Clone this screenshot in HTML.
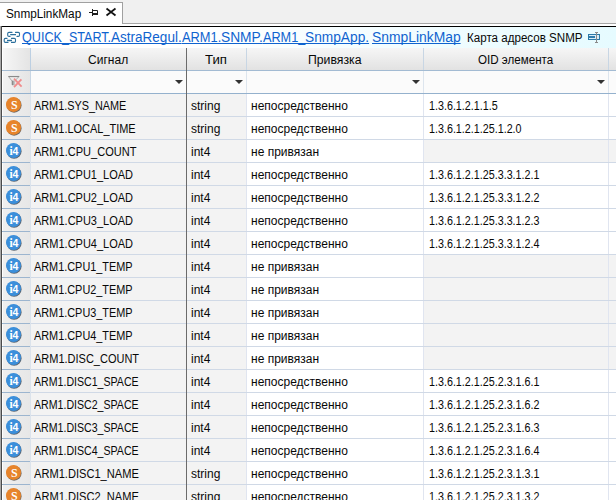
<!DOCTYPE html>
<html><head><meta charset="utf-8"><style>
*{margin:0;padding:0;box-sizing:border-box}
html,body{width:616px;height:500px;overflow:hidden;background:#f0f0f0;font-family:"Liberation Sans",sans-serif;font-size:12px;color:#080808}
.a{position:absolute}
.t{position:absolute;white-space:nowrap;transform-origin:0 0;display:block;line-height:14px}
</style></head><body>

<div class="a" style="left:122px;top:23px;width:494px;height:1px;background:#a6a6a6"></div>
<div class="a" style="left:0;top:2px;width:123px;height:24px;background:#fff;border-top:1px solid #a0a0a0;border-right:1px solid #a0a0a0"></div>
<div class="a" style="left:122px;top:24px;width:494px;height:2px;background:#fff"></div>
<span class="t" style="left:5.5px;top:7px;transform:scaleX(0.98)">SnmpLinkMap</span>
<svg class="a" style="left:84px;top:4px" width="40" height="20" viewBox="84 4 40 20">
<path d="M89 12.5H92.5" stroke="#1e1e1e" stroke-width="1"/>
<path d="M92.5 9V16" stroke="#1e1e1e" stroke-width="1"/>
<path d="M93 10.5H97.5V14H93" fill="none" stroke="#1e1e1e" stroke-width="1"/>
<path d="M93 13H98V15H93Z" fill="#1e1e1e"/>
<path d="M106.5 8.5L115.5 15.5M115.5 8.5L106.5 15.5" stroke="#111" stroke-width="1.7"/>
</svg>
<div class="a" style="left:1px;top:26px;width:615px;height:1px;background:#000"></div>
<div class="a" style="left:0;top:26px;width:1px;height:474px;background:#a8a8a8"></div>
<div class="a" style="left:1px;top:26px;width:1px;height:474px;background:#4a4a4a"></div>
<div class="a" style="left:2px;top:27px;width:614px;height:21px;background:linear-gradient(to right,#ffffff 0%,#ffffff 28%,#e6fbff 100%)"></div>
<svg class="a" style="left:0;top:28px" width="24" height="18" viewBox="0 28 24 18">
<g fill="none" stroke="#2b6f9c" stroke-width="1.1" stroke-linecap="round">
<path d="M12 32.4H9Q7.7 32.4 7.7 33.6V35.2Q7.7 36.4 9 36.4H10M15.5 32.4H18.3Q19.5 32.4 19.5 33.6V35.2Q19.5 36.4 18.3 36.4H17"/>
<path d="M7 38.4H5.4Q4.2 38.4 4.2 39.6V41.2Q4.2 42.4 5.4 42.4H8M11.5 38.4H14.3Q15.5 38.4 15.5 39.6V41.2Q15.5 42.4 14.3 42.4H11.5"/>
</g>
<path d="M10.2 34.6H16M7 40.5H12" stroke="#2b6f9c" stroke-width="1.3"/>
</svg>
<span class="t" style="left:22.4px;top:29.5px;font-size:14px;line-height:15px;color:#0f63cf;text-decoration:underline;text-decoration-skip-ink:none;transform:scaleX(0.8995)">QUICK_START.</span>
<span class="t" style="left:111.0px;top:29.5px;font-size:14px;line-height:15px;color:#0f63cf;text-decoration:underline;text-decoration-skip-ink:none;transform:scaleX(0.9664)">AstraRegul.</span>
<span class="t" style="left:181.7px;top:29.5px;font-size:14px;line-height:15px;color:#0f63cf;text-decoration:underline;text-decoration-skip-ink:none;transform:scaleX(0.9182)">ARM1.</span>
<span class="t" style="left:221.0px;top:29.5px;font-size:14px;line-height:15px;color:#0f63cf;text-decoration:underline;text-decoration-skip-ink:none;transform:scaleX(0.9824)">SNMP.</span>
<span class="t" style="left:262.8px;top:29.5px;font-size:14px;line-height:15px;color:#0f63cf;text-decoration:underline;text-decoration-skip-ink:none;transform:scaleX(0.9060)">ARM1_</span>
<span class="t" style="left:305.1px;top:29.5px;font-size:14px;line-height:15px;color:#0f63cf;text-decoration:underline;text-decoration-skip-ink:none;transform:scaleX(0.9804)">SnmpApp.</span>
<span class="t" style="left:372.4px;top:29.5px;font-size:14px;line-height:15px;color:#0f63cf;text-decoration:underline;text-decoration-skip-ink:none;transform:scaleX(0.99)">SnmpLinkMap</span>
<span class="t" style="left:467px;top:31px;transform:scaleX(0.966)">Карта адресов SNMP</span>
<svg class="a" style="left:582px;top:28px" width="24" height="18" viewBox="582 28 24 18">
<rect x="588.5" y="34.5" width="11" height="5" fill="#d8ecf6" stroke="#2b7aa8" stroke-width="1"/>
<rect x="589" y="36" width="6" height="2" fill="#2f7cac"/>
<path d="M596.5 32V43M595 32.5H598M595 42.5H598" stroke="#8a8a8a" stroke-width="1"/>
</svg>
<div class="a" style="left:2px;top:48px;width:614px;height:452px;background:#fff"></div>
<div class="a" style="left:3px;top:48px;width:613px;height:22px;background:linear-gradient(to bottom,#f6f6f6,#e2e2e2)"></div>
<div class="a" style="left:2px;top:70px;width:614px;height:1px;background:#a3bbd3"></div>
<div class="a" style="left:3px;top:48px;width:27px;height:22px;background:linear-gradient(to right,#f6f6f6,#e4e4e4)"></div>
<div class="a" style="left:30px;top:48px;width:1px;height:22px;background:#bccfe2"></div>
<div class="a" style="left:186px;top:48px;width:1px;height:22px;background:#c8d6e4"></div>
<div class="a" style="left:246px;top:48px;width:1px;height:22px;background:#c8d6e4"></div>
<div class="a" style="left:423px;top:48px;width:1px;height:22px;background:#c8d6e4"></div>
<div class="a" style="left:608px;top:48px;width:1px;height:22px;background:#c8d6e4"></div>
<div class="a" style="left:31px;top:71px;width:585px;height:22px;background:#fbfbfb"></div>
<div class="a" style="left:3px;top:71px;width:27px;height:22px;background:linear-gradient(to right,#f2f2f2,#e5e5e5)"></div>
<div class="a" style="left:2px;top:93px;width:614px;height:1px;background:#94b1cd"></div>
<div class="a" style="left:30px;top:71px;width:1px;height:22px;background:#c8d6e4"></div>
<div class="a" style="left:186px;top:71px;width:1px;height:22px;background:#dde5ee"></div>
<div class="a" style="left:246px;top:71px;width:1px;height:22px;background:#dde5ee"></div>
<div class="a" style="left:423px;top:71px;width:1px;height:22px;background:#dde5ee"></div>
<div class="a" style="left:608px;top:71px;width:1px;height:22px;background:#dde5ee"></div>
<svg class="a" style="left:174.5px;top:80px" width="8" height="4" viewBox="0 0 8 4"><path d="M0 0H8L4 4Z" fill="#333"/></svg>
<svg class="a" style="left:234.5px;top:80px" width="8" height="4" viewBox="0 0 8 4"><path d="M0 0H8L4 4Z" fill="#333"/></svg>
<svg class="a" style="left:411.5px;top:80px" width="8" height="4" viewBox="0 0 8 4"><path d="M0 0H8L4 4Z" fill="#333"/></svg>
<svg class="a" style="left:596.5px;top:80px" width="8" height="4" viewBox="0 0 8 4"><path d="M0 0H8L4 4Z" fill="#333"/></svg>
<svg class="a" style="left:6px;top:74px" width="20" height="16" viewBox="6 74 20 16">
<defs><linearGradient id="fs" x1="0" x2="1" y1="0" y2="0"><stop offset="0" stop-color="#7a7a7a"/><stop offset="1" stop-color="#d0d0d0"/></linearGradient></defs>
<path d="M8.6 76.6H19L14.6 81V84.8H12V81Z" fill="#ececec" stroke="#9c9c9c" stroke-width="0.8"/>
<path d="M8.4 76.5H19.2" stroke="#8a8a8a" stroke-width="1.1"/>
<rect x="12" y="80.6" width="2.6" height="4.4" fill="url(#fs)"/>
<path d="M14 78.6L21.6 86.6M21.4 79.4L14 87.2" stroke="#f08c8c" stroke-width="1.8"/>
</svg>
<span class="t" style="left:88.1px;top:53px;transform:scaleX(1.0)">Сигнал</span>
<span class="t" style="left:205.1px;top:53px;transform:scaleX(1.1)">Тип</span>
<span class="t" style="left:308.1px;top:53px;transform:scaleX(1.02)">Привязка</span>
<span class="t" style="left:477.8px;top:53px;transform:scaleX(0.967)">OID элемента</span>
<div class="a" style="left:3px;top:94px;width:27px;height:22px;background:linear-gradient(to right,#efefef,#e7e7e7)"></div>
<div class="a" style="left:31px;top:94px;width:215px;height:22px;background:#f3f3f3"></div>
<div class="a" style="left:2px;top:116px;width:28px;height:1px;background:#9cb5cf"></div>
<div class="a" style="left:31px;top:116px;width:585px;height:1px;background:#d0d9e6"></div>
<div class="a" style="left:30px;top:94px;width:1px;height:23px;background:#dbe3ec"></div>
<div class="a" style="left:186px;top:94px;width:1px;height:23px;background:#6b6b6b"></div>
<div class="a" style="left:246px;top:94px;width:1px;height:22px;background:#e0e5f0"></div>
<div class="a" style="left:423px;top:94px;width:1px;height:22px;background:#e0e5f0"></div>
<div class="a" style="left:608px;top:94px;width:1px;height:22px;background:#e0e5f0"></div>
<div class="a" style="left:5.6px;top:96.8px;width:15.2px;height:14.9px;border-radius:50%;background:#e7842b;box-shadow:0.6px 0.7px 0 #6f6a66"></div>
<span class="t" style="left:10.6px;top:97.6px;font-family:&quot;Liberation Serif&quot;,serif;font-size:12.5px;font-weight:bold;color:#fff;line-height:14px;transform:scaleX(0.95)">S</span>
<span class="t" style="left:34px;top:99px;transform:scaleX(0.905)">ARM1.SYS_NAME</span>
<span class="t" style="left:191px;top:99px">string</span>
<span class="t" style="left:251px;top:99px;transform:scaleX(1.0)">непосредственно</span>
<span class="t" style="left:428.6px;top:99px;transform:scaleX(0.895)">1.3.6.1.2.1.1.5</span>
<div class="a" style="left:3px;top:117px;width:27px;height:22px;background:linear-gradient(to right,#efefef,#e7e7e7)"></div>
<div class="a" style="left:31px;top:117px;width:215px;height:22px;background:#f3f3f3"></div>
<div class="a" style="left:2px;top:139px;width:28px;height:1px;background:#9cb5cf"></div>
<div class="a" style="left:31px;top:139px;width:585px;height:1px;background:#d0d9e6"></div>
<div class="a" style="left:30px;top:117px;width:1px;height:23px;background:#dbe3ec"></div>
<div class="a" style="left:186px;top:117px;width:1px;height:23px;background:#6b6b6b"></div>
<div class="a" style="left:246px;top:117px;width:1px;height:22px;background:#e0e5f0"></div>
<div class="a" style="left:423px;top:117px;width:1px;height:22px;background:#e0e5f0"></div>
<div class="a" style="left:608px;top:117px;width:1px;height:22px;background:#e0e5f0"></div>
<div class="a" style="left:5.6px;top:119.8px;width:15.2px;height:14.9px;border-radius:50%;background:#e7842b;box-shadow:0.6px 0.7px 0 #6f6a66"></div>
<span class="t" style="left:10.6px;top:120.6px;font-family:&quot;Liberation Serif&quot;,serif;font-size:12.5px;font-weight:bold;color:#fff;line-height:14px;transform:scaleX(0.95)">S</span>
<span class="t" style="left:34px;top:122px;transform:scaleX(0.913)">ARM1.LOCAL_TIME</span>
<span class="t" style="left:191px;top:122px">string</span>
<span class="t" style="left:251px;top:122px;transform:scaleX(1.0)">непосредственно</span>
<span class="t" style="left:428.6px;top:122px;transform:scaleX(0.895)">1.3.6.1.2.1.25.1.2.0</span>
<div class="a" style="left:3px;top:140px;width:27px;height:22px;background:linear-gradient(to right,#efefef,#e7e7e7)"></div>
<div class="a" style="left:31px;top:140px;width:215px;height:22px;background:#f3f3f3"></div>
<div class="a" style="left:424px;top:140px;width:192px;height:22px;background:#f3f3f3"></div>
<div class="a" style="left:2px;top:162px;width:28px;height:1px;background:#9cb5cf"></div>
<div class="a" style="left:31px;top:162px;width:585px;height:1px;background:#d0d9e6"></div>
<div class="a" style="left:30px;top:140px;width:1px;height:23px;background:#dbe3ec"></div>
<div class="a" style="left:186px;top:140px;width:1px;height:23px;background:#6b6b6b"></div>
<div class="a" style="left:246px;top:140px;width:1px;height:22px;background:#e0e5f0"></div>
<div class="a" style="left:423px;top:140px;width:1px;height:22px;background:#e0e5f0"></div>
<div class="a" style="left:608px;top:140px;width:1px;height:22px;background:#e0e5f0"></div>
<div class="a" style="left:5.6px;top:142.8px;width:15.2px;height:15px;border-radius:50%;background:#3b8fdb;box-shadow:0.6px 0.7px 0 #5a6470"></div>
<span class="t" style="left:9.4px;top:144.6px;font-family:&quot;Liberation Serif&quot;,serif;font-size:11.5px;font-weight:bold;color:#fff;line-height:12px">i</span>
<span class="t" style="left:12.4px;top:145.2px;font-size:10.5px;font-weight:bold;color:#fff;line-height:12px">4</span>
<span class="t" style="left:34px;top:145px;transform:scaleX(0.92)">ARM1.CPU_COUNT</span>
<span class="t" style="left:191px;top:145px">int4</span>
<span class="t" style="left:251px;top:145px;transform:scaleX(1.0)">не привязан</span>
<div class="a" style="left:3px;top:163px;width:27px;height:22px;background:linear-gradient(to right,#efefef,#e7e7e7)"></div>
<div class="a" style="left:31px;top:163px;width:215px;height:22px;background:#f3f3f3"></div>
<div class="a" style="left:2px;top:185px;width:28px;height:1px;background:#9cb5cf"></div>
<div class="a" style="left:31px;top:185px;width:585px;height:1px;background:#d0d9e6"></div>
<div class="a" style="left:30px;top:163px;width:1px;height:23px;background:#dbe3ec"></div>
<div class="a" style="left:186px;top:163px;width:1px;height:23px;background:#6b6b6b"></div>
<div class="a" style="left:246px;top:163px;width:1px;height:22px;background:#e0e5f0"></div>
<div class="a" style="left:423px;top:163px;width:1px;height:22px;background:#e0e5f0"></div>
<div class="a" style="left:608px;top:163px;width:1px;height:22px;background:#e0e5f0"></div>
<div class="a" style="left:5.6px;top:165.8px;width:15.2px;height:15px;border-radius:50%;background:#3b8fdb;box-shadow:0.6px 0.7px 0 #5a6470"></div>
<span class="t" style="left:9.4px;top:167.6px;font-family:&quot;Liberation Serif&quot;,serif;font-size:11.5px;font-weight:bold;color:#fff;line-height:12px">i</span>
<span class="t" style="left:12.4px;top:168.2px;font-size:10.5px;font-weight:bold;color:#fff;line-height:12px">4</span>
<span class="t" style="left:34px;top:168px;transform:scaleX(0.917)">ARM1.CPU1_LOAD</span>
<span class="t" style="left:191px;top:168px">int4</span>
<span class="t" style="left:251px;top:168px;transform:scaleX(1.0)">непосредственно</span>
<span class="t" style="left:428.6px;top:168px;transform:scaleX(0.895)">1.3.6.1.2.1.25.3.3.1.2.1</span>
<div class="a" style="left:3px;top:186px;width:27px;height:22px;background:linear-gradient(to right,#efefef,#e7e7e7)"></div>
<div class="a" style="left:31px;top:186px;width:215px;height:22px;background:#f3f3f3"></div>
<div class="a" style="left:2px;top:208px;width:28px;height:1px;background:#9cb5cf"></div>
<div class="a" style="left:31px;top:208px;width:585px;height:1px;background:#d0d9e6"></div>
<div class="a" style="left:30px;top:186px;width:1px;height:23px;background:#dbe3ec"></div>
<div class="a" style="left:186px;top:186px;width:1px;height:23px;background:#6b6b6b"></div>
<div class="a" style="left:246px;top:186px;width:1px;height:22px;background:#e0e5f0"></div>
<div class="a" style="left:423px;top:186px;width:1px;height:22px;background:#e0e5f0"></div>
<div class="a" style="left:608px;top:186px;width:1px;height:22px;background:#e0e5f0"></div>
<div class="a" style="left:5.6px;top:188.8px;width:15.2px;height:15px;border-radius:50%;background:#3b8fdb;box-shadow:0.6px 0.7px 0 #5a6470"></div>
<span class="t" style="left:9.4px;top:190.6px;font-family:&quot;Liberation Serif&quot;,serif;font-size:11.5px;font-weight:bold;color:#fff;line-height:12px">i</span>
<span class="t" style="left:12.4px;top:191.2px;font-size:10.5px;font-weight:bold;color:#fff;line-height:12px">4</span>
<span class="t" style="left:34px;top:191px;transform:scaleX(0.917)">ARM1.CPU2_LOAD</span>
<span class="t" style="left:191px;top:191px">int4</span>
<span class="t" style="left:251px;top:191px;transform:scaleX(1.0)">непосредственно</span>
<span class="t" style="left:428.6px;top:191px;transform:scaleX(0.895)">1.3.6.1.2.1.25.3.3.1.2.2</span>
<div class="a" style="left:3px;top:209px;width:27px;height:22px;background:linear-gradient(to right,#efefef,#e7e7e7)"></div>
<div class="a" style="left:31px;top:209px;width:215px;height:22px;background:#f3f3f3"></div>
<div class="a" style="left:2px;top:231px;width:28px;height:1px;background:#9cb5cf"></div>
<div class="a" style="left:31px;top:231px;width:585px;height:1px;background:#d0d9e6"></div>
<div class="a" style="left:30px;top:209px;width:1px;height:23px;background:#dbe3ec"></div>
<div class="a" style="left:186px;top:209px;width:1px;height:23px;background:#6b6b6b"></div>
<div class="a" style="left:246px;top:209px;width:1px;height:22px;background:#e0e5f0"></div>
<div class="a" style="left:423px;top:209px;width:1px;height:22px;background:#e0e5f0"></div>
<div class="a" style="left:608px;top:209px;width:1px;height:22px;background:#e0e5f0"></div>
<div class="a" style="left:5.6px;top:211.8px;width:15.2px;height:15px;border-radius:50%;background:#3b8fdb;box-shadow:0.6px 0.7px 0 #5a6470"></div>
<span class="t" style="left:9.4px;top:213.6px;font-family:&quot;Liberation Serif&quot;,serif;font-size:11.5px;font-weight:bold;color:#fff;line-height:12px">i</span>
<span class="t" style="left:12.4px;top:214.2px;font-size:10.5px;font-weight:bold;color:#fff;line-height:12px">4</span>
<span class="t" style="left:34px;top:214px;transform:scaleX(0.917)">ARM1.CPU3_LOAD</span>
<span class="t" style="left:191px;top:214px">int4</span>
<span class="t" style="left:251px;top:214px;transform:scaleX(1.0)">непосредственно</span>
<span class="t" style="left:428.6px;top:214px;transform:scaleX(0.895)">1.3.6.1.2.1.25.3.3.1.2.3</span>
<div class="a" style="left:3px;top:232px;width:27px;height:22px;background:linear-gradient(to right,#efefef,#e7e7e7)"></div>
<div class="a" style="left:31px;top:232px;width:215px;height:22px;background:#f3f3f3"></div>
<div class="a" style="left:2px;top:254px;width:28px;height:1px;background:#9cb5cf"></div>
<div class="a" style="left:31px;top:254px;width:585px;height:1px;background:#d0d9e6"></div>
<div class="a" style="left:30px;top:232px;width:1px;height:23px;background:#dbe3ec"></div>
<div class="a" style="left:186px;top:232px;width:1px;height:23px;background:#6b6b6b"></div>
<div class="a" style="left:246px;top:232px;width:1px;height:22px;background:#e0e5f0"></div>
<div class="a" style="left:423px;top:232px;width:1px;height:22px;background:#e0e5f0"></div>
<div class="a" style="left:608px;top:232px;width:1px;height:22px;background:#e0e5f0"></div>
<div class="a" style="left:5.6px;top:234.8px;width:15.2px;height:15px;border-radius:50%;background:#3b8fdb;box-shadow:0.6px 0.7px 0 #5a6470"></div>
<span class="t" style="left:9.4px;top:236.6px;font-family:&quot;Liberation Serif&quot;,serif;font-size:11.5px;font-weight:bold;color:#fff;line-height:12px">i</span>
<span class="t" style="left:12.4px;top:237.2px;font-size:10.5px;font-weight:bold;color:#fff;line-height:12px">4</span>
<span class="t" style="left:34px;top:237px;transform:scaleX(0.917)">ARM1.CPU4_LOAD</span>
<span class="t" style="left:191px;top:237px">int4</span>
<span class="t" style="left:251px;top:237px;transform:scaleX(1.0)">непосредственно</span>
<span class="t" style="left:428.6px;top:237px;transform:scaleX(0.895)">1.3.6.1.2.1.25.3.3.1.2.4</span>
<div class="a" style="left:3px;top:255px;width:27px;height:22px;background:linear-gradient(to right,#efefef,#e7e7e7)"></div>
<div class="a" style="left:31px;top:255px;width:215px;height:22px;background:#f3f3f3"></div>
<div class="a" style="left:424px;top:255px;width:192px;height:22px;background:#f3f3f3"></div>
<div class="a" style="left:2px;top:277px;width:28px;height:1px;background:#9cb5cf"></div>
<div class="a" style="left:31px;top:277px;width:585px;height:1px;background:#d0d9e6"></div>
<div class="a" style="left:30px;top:255px;width:1px;height:23px;background:#dbe3ec"></div>
<div class="a" style="left:186px;top:255px;width:1px;height:23px;background:#6b6b6b"></div>
<div class="a" style="left:246px;top:255px;width:1px;height:22px;background:#e0e5f0"></div>
<div class="a" style="left:423px;top:255px;width:1px;height:22px;background:#e0e5f0"></div>
<div class="a" style="left:608px;top:255px;width:1px;height:22px;background:#e0e5f0"></div>
<div class="a" style="left:5.6px;top:257.8px;width:15.2px;height:15px;border-radius:50%;background:#3b8fdb;box-shadow:0.6px 0.7px 0 #5a6470"></div>
<span class="t" style="left:9.4px;top:259.6px;font-family:&quot;Liberation Serif&quot;,serif;font-size:11.5px;font-weight:bold;color:#fff;line-height:12px">i</span>
<span class="t" style="left:12.4px;top:260.2px;font-size:10.5px;font-weight:bold;color:#fff;line-height:12px">4</span>
<span class="t" style="left:34px;top:260px;transform:scaleX(0.907)">ARM1.CPU1_TEMP</span>
<span class="t" style="left:191px;top:260px">int4</span>
<span class="t" style="left:251px;top:260px;transform:scaleX(1.0)">не привязан</span>
<div class="a" style="left:3px;top:278px;width:27px;height:22px;background:linear-gradient(to right,#efefef,#e7e7e7)"></div>
<div class="a" style="left:31px;top:278px;width:215px;height:22px;background:#f3f3f3"></div>
<div class="a" style="left:424px;top:278px;width:192px;height:22px;background:#f3f3f3"></div>
<div class="a" style="left:2px;top:300px;width:28px;height:1px;background:#9cb5cf"></div>
<div class="a" style="left:31px;top:300px;width:585px;height:1px;background:#d0d9e6"></div>
<div class="a" style="left:30px;top:278px;width:1px;height:23px;background:#dbe3ec"></div>
<div class="a" style="left:186px;top:278px;width:1px;height:23px;background:#6b6b6b"></div>
<div class="a" style="left:246px;top:278px;width:1px;height:22px;background:#e0e5f0"></div>
<div class="a" style="left:423px;top:278px;width:1px;height:22px;background:#e0e5f0"></div>
<div class="a" style="left:608px;top:278px;width:1px;height:22px;background:#e0e5f0"></div>
<div class="a" style="left:5.6px;top:280.8px;width:15.2px;height:15px;border-radius:50%;background:#3b8fdb;box-shadow:0.6px 0.7px 0 #5a6470"></div>
<span class="t" style="left:9.4px;top:282.6px;font-family:&quot;Liberation Serif&quot;,serif;font-size:11.5px;font-weight:bold;color:#fff;line-height:12px">i</span>
<span class="t" style="left:12.4px;top:283.2px;font-size:10.5px;font-weight:bold;color:#fff;line-height:12px">4</span>
<span class="t" style="left:34px;top:283px;transform:scaleX(0.907)">ARM1.CPU2_TEMP</span>
<span class="t" style="left:191px;top:283px">int4</span>
<span class="t" style="left:251px;top:283px;transform:scaleX(1.0)">не привязан</span>
<div class="a" style="left:3px;top:301px;width:27px;height:22px;background:linear-gradient(to right,#efefef,#e7e7e7)"></div>
<div class="a" style="left:31px;top:301px;width:215px;height:22px;background:#f3f3f3"></div>
<div class="a" style="left:424px;top:301px;width:192px;height:22px;background:#f3f3f3"></div>
<div class="a" style="left:2px;top:323px;width:28px;height:1px;background:#9cb5cf"></div>
<div class="a" style="left:31px;top:323px;width:585px;height:1px;background:#d0d9e6"></div>
<div class="a" style="left:30px;top:301px;width:1px;height:23px;background:#dbe3ec"></div>
<div class="a" style="left:186px;top:301px;width:1px;height:23px;background:#6b6b6b"></div>
<div class="a" style="left:246px;top:301px;width:1px;height:22px;background:#e0e5f0"></div>
<div class="a" style="left:423px;top:301px;width:1px;height:22px;background:#e0e5f0"></div>
<div class="a" style="left:608px;top:301px;width:1px;height:22px;background:#e0e5f0"></div>
<div class="a" style="left:5.6px;top:303.8px;width:15.2px;height:15px;border-radius:50%;background:#3b8fdb;box-shadow:0.6px 0.7px 0 #5a6470"></div>
<span class="t" style="left:9.4px;top:305.6px;font-family:&quot;Liberation Serif&quot;,serif;font-size:11.5px;font-weight:bold;color:#fff;line-height:12px">i</span>
<span class="t" style="left:12.4px;top:306.2px;font-size:10.5px;font-weight:bold;color:#fff;line-height:12px">4</span>
<span class="t" style="left:34px;top:306px;transform:scaleX(0.907)">ARM1.CPU3_TEMP</span>
<span class="t" style="left:191px;top:306px">int4</span>
<span class="t" style="left:251px;top:306px;transform:scaleX(1.0)">не привязан</span>
<div class="a" style="left:3px;top:324px;width:27px;height:22px;background:linear-gradient(to right,#efefef,#e7e7e7)"></div>
<div class="a" style="left:31px;top:324px;width:215px;height:22px;background:#f3f3f3"></div>
<div class="a" style="left:424px;top:324px;width:192px;height:22px;background:#f3f3f3"></div>
<div class="a" style="left:2px;top:346px;width:28px;height:1px;background:#9cb5cf"></div>
<div class="a" style="left:31px;top:346px;width:585px;height:1px;background:#d0d9e6"></div>
<div class="a" style="left:30px;top:324px;width:1px;height:23px;background:#dbe3ec"></div>
<div class="a" style="left:186px;top:324px;width:1px;height:23px;background:#6b6b6b"></div>
<div class="a" style="left:246px;top:324px;width:1px;height:22px;background:#e0e5f0"></div>
<div class="a" style="left:423px;top:324px;width:1px;height:22px;background:#e0e5f0"></div>
<div class="a" style="left:608px;top:324px;width:1px;height:22px;background:#e0e5f0"></div>
<div class="a" style="left:5.6px;top:326.8px;width:15.2px;height:15px;border-radius:50%;background:#3b8fdb;box-shadow:0.6px 0.7px 0 #5a6470"></div>
<span class="t" style="left:9.4px;top:328.6px;font-family:&quot;Liberation Serif&quot;,serif;font-size:11.5px;font-weight:bold;color:#fff;line-height:12px">i</span>
<span class="t" style="left:12.4px;top:329.2px;font-size:10.5px;font-weight:bold;color:#fff;line-height:12px">4</span>
<span class="t" style="left:34px;top:329px;transform:scaleX(0.907)">ARM1.CPU4_TEMP</span>
<span class="t" style="left:191px;top:329px">int4</span>
<span class="t" style="left:251px;top:329px;transform:scaleX(1.0)">не привязан</span>
<div class="a" style="left:3px;top:347px;width:27px;height:22px;background:linear-gradient(to right,#efefef,#e7e7e7)"></div>
<div class="a" style="left:31px;top:347px;width:215px;height:22px;background:#f3f3f3"></div>
<div class="a" style="left:424px;top:347px;width:192px;height:22px;background:#f3f3f3"></div>
<div class="a" style="left:2px;top:369px;width:28px;height:1px;background:#9cb5cf"></div>
<div class="a" style="left:31px;top:369px;width:585px;height:1px;background:#d0d9e6"></div>
<div class="a" style="left:30px;top:347px;width:1px;height:23px;background:#dbe3ec"></div>
<div class="a" style="left:186px;top:347px;width:1px;height:23px;background:#6b6b6b"></div>
<div class="a" style="left:246px;top:347px;width:1px;height:22px;background:#e0e5f0"></div>
<div class="a" style="left:423px;top:347px;width:1px;height:22px;background:#e0e5f0"></div>
<div class="a" style="left:608px;top:347px;width:1px;height:22px;background:#e0e5f0"></div>
<div class="a" style="left:5.6px;top:349.8px;width:15.2px;height:15px;border-radius:50%;background:#3b8fdb;box-shadow:0.6px 0.7px 0 #5a6470"></div>
<span class="t" style="left:9.4px;top:351.6px;font-family:&quot;Liberation Serif&quot;,serif;font-size:11.5px;font-weight:bold;color:#fff;line-height:12px">i</span>
<span class="t" style="left:12.4px;top:352.2px;font-size:10.5px;font-weight:bold;color:#fff;line-height:12px">4</span>
<span class="t" style="left:34px;top:352px;transform:scaleX(0.916)">ARM1.DISC_COUNT</span>
<span class="t" style="left:191px;top:352px">int4</span>
<span class="t" style="left:251px;top:352px;transform:scaleX(1.0)">не привязан</span>
<div class="a" style="left:3px;top:370px;width:27px;height:22px;background:linear-gradient(to right,#efefef,#e7e7e7)"></div>
<div class="a" style="left:31px;top:370px;width:215px;height:22px;background:#f3f3f3"></div>
<div class="a" style="left:2px;top:392px;width:28px;height:1px;background:#9cb5cf"></div>
<div class="a" style="left:31px;top:392px;width:585px;height:1px;background:#d0d9e6"></div>
<div class="a" style="left:30px;top:370px;width:1px;height:23px;background:#dbe3ec"></div>
<div class="a" style="left:186px;top:370px;width:1px;height:23px;background:#6b6b6b"></div>
<div class="a" style="left:246px;top:370px;width:1px;height:22px;background:#e0e5f0"></div>
<div class="a" style="left:423px;top:370px;width:1px;height:22px;background:#e0e5f0"></div>
<div class="a" style="left:608px;top:370px;width:1px;height:22px;background:#e0e5f0"></div>
<div class="a" style="left:5.6px;top:372.8px;width:15.2px;height:15px;border-radius:50%;background:#3b8fdb;box-shadow:0.6px 0.7px 0 #5a6470"></div>
<span class="t" style="left:9.4px;top:374.6px;font-family:&quot;Liberation Serif&quot;,serif;font-size:11.5px;font-weight:bold;color:#fff;line-height:12px">i</span>
<span class="t" style="left:12.4px;top:375.2px;font-size:10.5px;font-weight:bold;color:#fff;line-height:12px">4</span>
<span class="t" style="left:34px;top:375px;transform:scaleX(0.883)">ARM1.DISC1_SPACE</span>
<span class="t" style="left:191px;top:375px">int4</span>
<span class="t" style="left:251px;top:375px;transform:scaleX(1.0)">непосредственно</span>
<span class="t" style="left:428.6px;top:375px;transform:scaleX(0.895)">1.3.6.1.2.1.25.2.3.1.6.1</span>
<div class="a" style="left:3px;top:393px;width:27px;height:22px;background:linear-gradient(to right,#efefef,#e7e7e7)"></div>
<div class="a" style="left:31px;top:393px;width:215px;height:22px;background:#f3f3f3"></div>
<div class="a" style="left:2px;top:415px;width:28px;height:1px;background:#9cb5cf"></div>
<div class="a" style="left:31px;top:415px;width:585px;height:1px;background:#d0d9e6"></div>
<div class="a" style="left:30px;top:393px;width:1px;height:23px;background:#dbe3ec"></div>
<div class="a" style="left:186px;top:393px;width:1px;height:23px;background:#6b6b6b"></div>
<div class="a" style="left:246px;top:393px;width:1px;height:22px;background:#e0e5f0"></div>
<div class="a" style="left:423px;top:393px;width:1px;height:22px;background:#e0e5f0"></div>
<div class="a" style="left:608px;top:393px;width:1px;height:22px;background:#e0e5f0"></div>
<div class="a" style="left:5.6px;top:395.8px;width:15.2px;height:15px;border-radius:50%;background:#3b8fdb;box-shadow:0.6px 0.7px 0 #5a6470"></div>
<span class="t" style="left:9.4px;top:397.6px;font-family:&quot;Liberation Serif&quot;,serif;font-size:11.5px;font-weight:bold;color:#fff;line-height:12px">i</span>
<span class="t" style="left:12.4px;top:398.2px;font-size:10.5px;font-weight:bold;color:#fff;line-height:12px">4</span>
<span class="t" style="left:34px;top:398px;transform:scaleX(0.883)">ARM1.DISC2_SPACE</span>
<span class="t" style="left:191px;top:398px">int4</span>
<span class="t" style="left:251px;top:398px;transform:scaleX(1.0)">непосредственно</span>
<span class="t" style="left:428.6px;top:398px;transform:scaleX(0.895)">1.3.6.1.2.1.25.2.3.1.6.2</span>
<div class="a" style="left:3px;top:416px;width:27px;height:22px;background:linear-gradient(to right,#efefef,#e7e7e7)"></div>
<div class="a" style="left:31px;top:416px;width:215px;height:22px;background:#f3f3f3"></div>
<div class="a" style="left:2px;top:438px;width:28px;height:1px;background:#9cb5cf"></div>
<div class="a" style="left:31px;top:438px;width:585px;height:1px;background:#d0d9e6"></div>
<div class="a" style="left:30px;top:416px;width:1px;height:23px;background:#dbe3ec"></div>
<div class="a" style="left:186px;top:416px;width:1px;height:23px;background:#6b6b6b"></div>
<div class="a" style="left:246px;top:416px;width:1px;height:22px;background:#e0e5f0"></div>
<div class="a" style="left:423px;top:416px;width:1px;height:22px;background:#e0e5f0"></div>
<div class="a" style="left:608px;top:416px;width:1px;height:22px;background:#e0e5f0"></div>
<div class="a" style="left:5.6px;top:418.8px;width:15.2px;height:15px;border-radius:50%;background:#3b8fdb;box-shadow:0.6px 0.7px 0 #5a6470"></div>
<span class="t" style="left:9.4px;top:420.6px;font-family:&quot;Liberation Serif&quot;,serif;font-size:11.5px;font-weight:bold;color:#fff;line-height:12px">i</span>
<span class="t" style="left:12.4px;top:421.2px;font-size:10.5px;font-weight:bold;color:#fff;line-height:12px">4</span>
<span class="t" style="left:34px;top:421px;transform:scaleX(0.883)">ARM1.DISC3_SPACE</span>
<span class="t" style="left:191px;top:421px">int4</span>
<span class="t" style="left:251px;top:421px;transform:scaleX(1.0)">непосредственно</span>
<span class="t" style="left:428.6px;top:421px;transform:scaleX(0.895)">1.3.6.1.2.1.25.2.3.1.6.3</span>
<div class="a" style="left:3px;top:439px;width:27px;height:22px;background:linear-gradient(to right,#efefef,#e7e7e7)"></div>
<div class="a" style="left:31px;top:439px;width:215px;height:22px;background:#f3f3f3"></div>
<div class="a" style="left:2px;top:461px;width:28px;height:1px;background:#9cb5cf"></div>
<div class="a" style="left:31px;top:461px;width:585px;height:1px;background:#d0d9e6"></div>
<div class="a" style="left:30px;top:439px;width:1px;height:23px;background:#dbe3ec"></div>
<div class="a" style="left:186px;top:439px;width:1px;height:23px;background:#6b6b6b"></div>
<div class="a" style="left:246px;top:439px;width:1px;height:22px;background:#e0e5f0"></div>
<div class="a" style="left:423px;top:439px;width:1px;height:22px;background:#e0e5f0"></div>
<div class="a" style="left:608px;top:439px;width:1px;height:22px;background:#e0e5f0"></div>
<div class="a" style="left:5.6px;top:441.8px;width:15.2px;height:15px;border-radius:50%;background:#3b8fdb;box-shadow:0.6px 0.7px 0 #5a6470"></div>
<span class="t" style="left:9.4px;top:443.6px;font-family:&quot;Liberation Serif&quot;,serif;font-size:11.5px;font-weight:bold;color:#fff;line-height:12px">i</span>
<span class="t" style="left:12.4px;top:444.2px;font-size:10.5px;font-weight:bold;color:#fff;line-height:12px">4</span>
<span class="t" style="left:34px;top:444px;transform:scaleX(0.883)">ARM1.DISC4_SPACE</span>
<span class="t" style="left:191px;top:444px">int4</span>
<span class="t" style="left:251px;top:444px;transform:scaleX(1.0)">непосредственно</span>
<span class="t" style="left:428.6px;top:444px;transform:scaleX(0.895)">1.3.6.1.2.1.25.2.3.1.6.4</span>
<div class="a" style="left:3px;top:462px;width:27px;height:22px;background:linear-gradient(to right,#efefef,#e7e7e7)"></div>
<div class="a" style="left:31px;top:462px;width:215px;height:22px;background:#f3f3f3"></div>
<div class="a" style="left:2px;top:484px;width:28px;height:1px;background:#9cb5cf"></div>
<div class="a" style="left:31px;top:484px;width:585px;height:1px;background:#d0d9e6"></div>
<div class="a" style="left:30px;top:462px;width:1px;height:23px;background:#dbe3ec"></div>
<div class="a" style="left:186px;top:462px;width:1px;height:23px;background:#6b6b6b"></div>
<div class="a" style="left:246px;top:462px;width:1px;height:22px;background:#e0e5f0"></div>
<div class="a" style="left:423px;top:462px;width:1px;height:22px;background:#e0e5f0"></div>
<div class="a" style="left:608px;top:462px;width:1px;height:22px;background:#e0e5f0"></div>
<div class="a" style="left:5.6px;top:464.8px;width:15.2px;height:14.9px;border-radius:50%;background:#e7842b;box-shadow:0.6px 0.7px 0 #6f6a66"></div>
<span class="t" style="left:10.6px;top:465.6px;font-family:&quot;Liberation Serif&quot;,serif;font-size:12.5px;font-weight:bold;color:#fff;line-height:14px;transform:scaleX(0.95)">S</span>
<span class="t" style="left:34px;top:467px;transform:scaleX(0.925)">ARM1.DISC1_NAME</span>
<span class="t" style="left:191px;top:467px">string</span>
<span class="t" style="left:251px;top:467px;transform:scaleX(1.0)">непосредственно</span>
<span class="t" style="left:428.6px;top:467px;transform:scaleX(0.895)">1.3.6.1.2.1.25.2.3.1.3.1</span>
<div class="a" style="left:3px;top:485px;width:27px;height:22px;background:linear-gradient(to right,#efefef,#e7e7e7)"></div>
<div class="a" style="left:31px;top:485px;width:215px;height:22px;background:#f3f3f3"></div>
<div class="a" style="left:2px;top:507px;width:28px;height:1px;background:#9cb5cf"></div>
<div class="a" style="left:31px;top:507px;width:585px;height:1px;background:#d0d9e6"></div>
<div class="a" style="left:30px;top:485px;width:1px;height:23px;background:#dbe3ec"></div>
<div class="a" style="left:186px;top:485px;width:1px;height:23px;background:#6b6b6b"></div>
<div class="a" style="left:246px;top:485px;width:1px;height:22px;background:#e0e5f0"></div>
<div class="a" style="left:423px;top:485px;width:1px;height:22px;background:#e0e5f0"></div>
<div class="a" style="left:608px;top:485px;width:1px;height:22px;background:#e0e5f0"></div>
<div class="a" style="left:5.6px;top:487.8px;width:15.2px;height:14.9px;border-radius:50%;background:#e7842b;box-shadow:0.6px 0.7px 0 #6f6a66"></div>
<span class="t" style="left:10.6px;top:488.6px;font-family:&quot;Liberation Serif&quot;,serif;font-size:12.5px;font-weight:bold;color:#fff;line-height:14px;transform:scaleX(0.95)">S</span>
<span class="t" style="left:34px;top:490px;transform:scaleX(0.925)">ARM1.DISC2_NAME</span>
<span class="t" style="left:191px;top:490px">string</span>
<span class="t" style="left:251px;top:490px;transform:scaleX(1.0)">непосредственно</span>
<span class="t" style="left:428.6px;top:490px;transform:scaleX(0.895)">1.3.6.1.2.1.25.2.3.1.3.2</span>
<div class="a" style="left:186px;top:48px;width:1px;height:46px;background:#6b6b6b"></div>
</body></html>
